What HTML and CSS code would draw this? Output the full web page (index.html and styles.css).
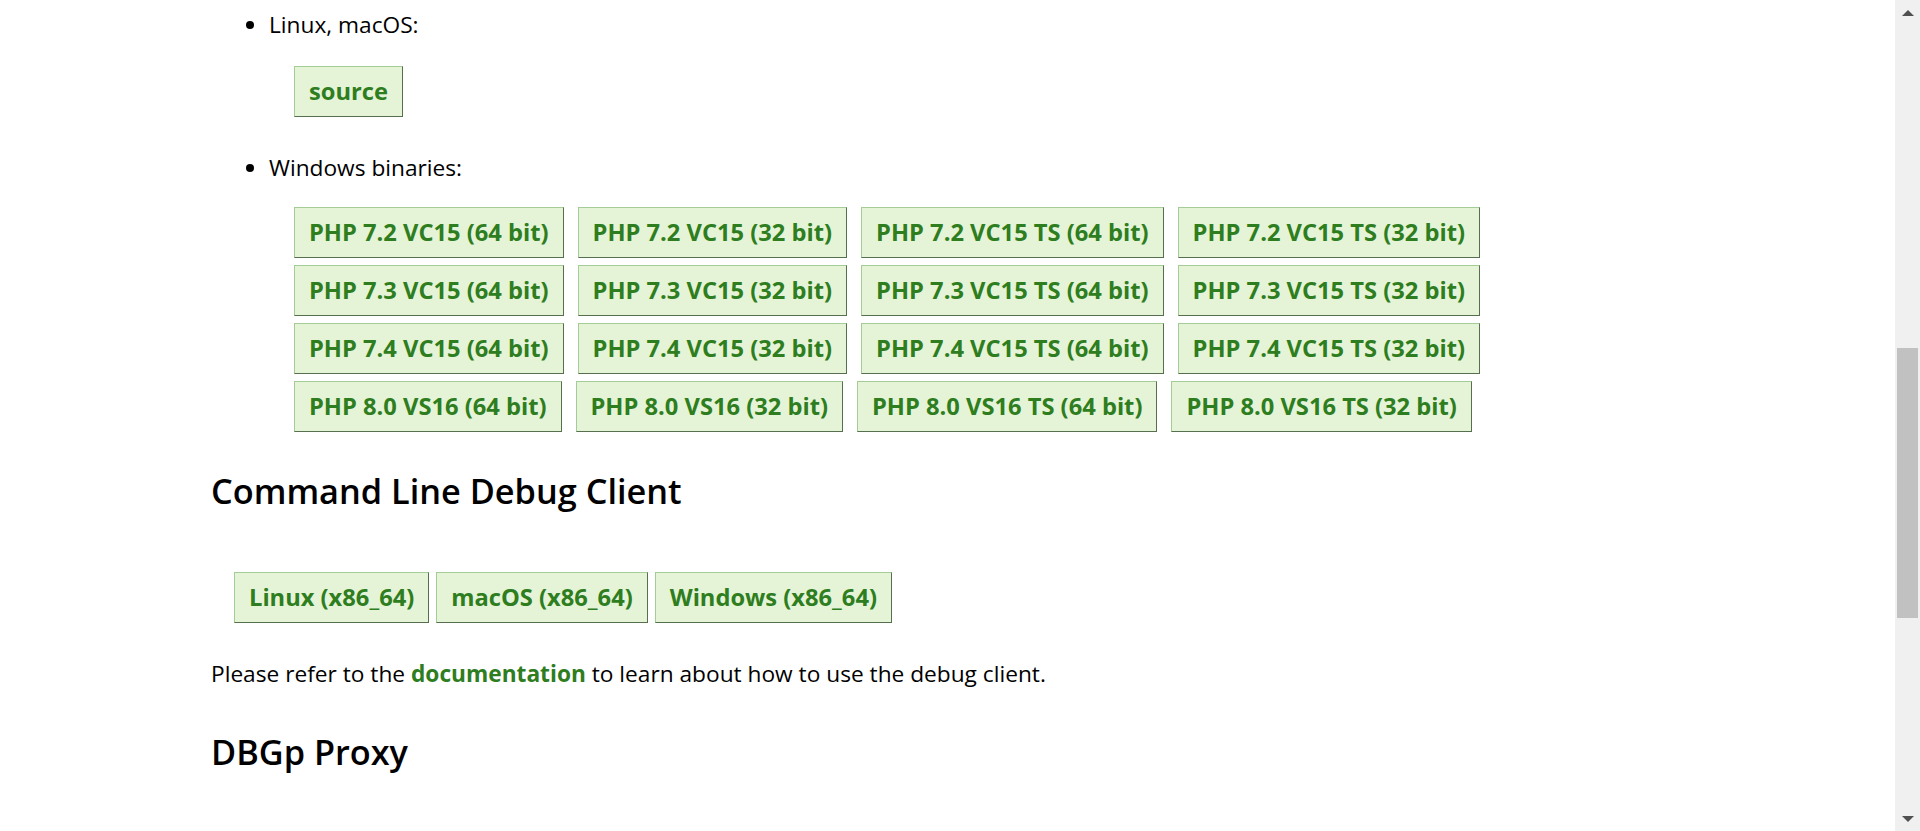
FILE: index.html
```html
<!DOCTYPE html>
<html>
  <head>
    <title>Xdebug: Downloads</title>
    <meta charset="UTF-8" />
    <link rel="stylesheet" href="styles.css">
  </head>

  <body>
    <div id="page">

      <!-- page content -->
      <div id="content">
        <ul class="downloads">
          <li>
            <p class="label">Linux, macOS:</p>
            <div class="buttons">
              <a class="button" href="#">source</a>
            </div>
          </li>
          <li class="windows">
            <p class="label">Windows binaries:</p>
            <div class="buttons binaries">
              <div class="row">
                <a class="button" href="#">PHP 7.2 VC15 (64 bit)</a>
                <a class="button" href="#">PHP 7.2 VC15 (32 bit)</a>
                <a class="button" href="#">PHP 7.2 VC15 TS (64 bit)</a>
                <a class="button" href="#">PHP 7.2 VC15 TS (32 bit)</a>
              </div>
              <div class="row">
                <a class="button" href="#">PHP 7.3 VC15 (64 bit)</a>
                <a class="button" href="#">PHP 7.3 VC15 (32 bit)</a>
                <a class="button" href="#">PHP 7.3 VC15 TS (64 bit)</a>
                <a class="button" href="#">PHP 7.3 VC15 TS (32 bit)</a>
              </div>
              <div class="row">
                <a class="button" href="#">PHP 7.4 VC15 (64 bit)</a>
                <a class="button" href="#">PHP 7.4 VC15 (32 bit)</a>
                <a class="button" href="#">PHP 7.4 VC15 TS (64 bit)</a>
                <a class="button" href="#">PHP 7.4 VC15 TS (32 bit)</a>
              </div>
              <div class="row">
                <a class="button" href="#">PHP 8.0 VS16 (64 bit)</a>
                <a class="button" href="#">PHP 8.0 VS16 (32 bit)</a>
                <a class="button" href="#">PHP 8.0 VS16 TS (64 bit)</a>
                <a class="button" href="#">PHP 8.0 VS16 TS (32 bit)</a>
              </div>
            </div>
          </li>
        </ul>

        <h2 class="first">Command Line Debug Client</h2>
        <div class="buttons client">
          <a class="button" href="#">Linux (x86_64)</a>
          <a class="button" href="#">macOS (x86_64)</a>
          <a class="button" href="#">Windows (x86_64)</a>
        </div>

        <p class="note">Please refer to the <a href="#">documentation</a> to learn about how to use the debug client.</p>

        <h2 class="proxy">DBGp Proxy</h2>
      </div>

      <!-- window scrollbar -->
      <div class="scrollbar">
        <div class="arrow up"></div>
        <div class="track"><div class="thumb"></div></div>
        <div class="arrow down"></div>
      </div>
    </div>
  </body>
</html>
```

FILE: styles.css
```css
html, body {
  margin: 0;
  height: 100%;
  overflow: hidden;
}

body {
  background: #fff;
  color: #000;
  font-family: "Open Sans", "Noto Sans", sans-serif;
  font-size: 22.7px;
  line-height: 33px;
}

a {
  color: #2e7d1e;
  font-weight: bold;
  text-decoration: none;
}

#page {
  display: flex;
  height: 831px;
}

#content {
  flex: 1;
  padding: 8px 0 0 211px;
}

p {
  margin: 0;
}

/* download lists */
ul.downloads {
  margin: 0;
  padding-left: 58px;
}
ul.downloads li.windows {
  margin-top: 34px;
}

.buttons {
  display: flex;
  margin-top: 25px;
  margin-left: 25px;
}
.buttons.binaries {
  flex-direction: column;
  gap: 7px;
  margin-top: 23px;
}
.buttons .row {
  display: flex;
  gap: 14px;
}

.button {
  display: block;
  padding: 8px 14px;
  font-size: 23.7px;
  line-height: 33px;
  background-color: #e5f4d7;
  border: 1px solid;
  border-color: #a3cc97 #56704f #56704f #a3cc97;
  white-space: nowrap;
}

/* headings */
h2 {
  margin: 0;
  font-size: 34.3px;
  font-weight: 600;
  line-height: 43px;
}
h2.first {
  margin-top: 37px;
}
h2.proxy {
  margin-top: 40px;
}

.buttons.client {
  margin: 60px 0 0 23px;
  gap: 7px;
}

p.note {
  margin-top: 34px;
}

/* window scrollbar */
.scrollbar {
  width: 25px;
  background: #f0f0f0;
  display: flex;
  flex-direction: column;
}
.arrow {
  height: 25px;
  display: flex;
  justify-content: center;
  align-items: center;
}
.arrow::before {
  content: "";
  border-left: 6px solid transparent;
  border-right: 6px solid transparent;
}
.arrow.up::before {
  border-bottom: 6px solid #505050;
}
.arrow.down::before {
  border-top: 6px solid #505050;
}
.track {
  flex: 1;
}
.thumb {
  margin: 323px 2px 0 2px;
  height: 270px;
  background: #c1c1c1;
}
```
